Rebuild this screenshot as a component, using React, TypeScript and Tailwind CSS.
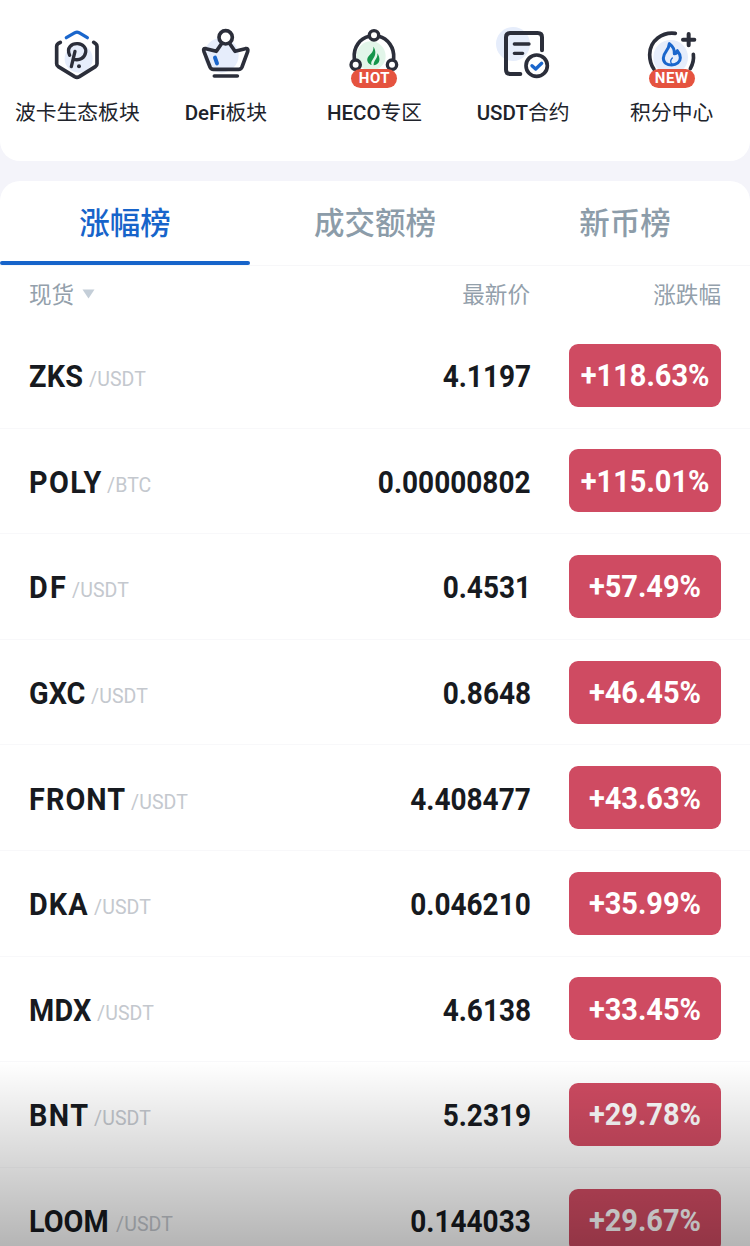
import React from 'react';

const ink = '#2b2e3a';
const blue = '#1a66cc';
const pale = '#e6edfb';

function PolkaIcon() {
  return (
    <svg viewBox="132 42 198 198" className="h-[66px] w-[66px]" fill="none" strokeLinecap="round" strokeLinejoin="round">
      <circle cx="236" cy="146" r="42" fill={pale} />
      <path d="M181 97 L174 101 Q170 104 170 109 V161 Q170 167 175 170 L224 200 Q231 204 238 200 L286 170 Q291 167 291 161 V109 Q291 104 287 101 L281 97" stroke={ink} strokeWidth="11" />
      <path d="M199 83 L225 68 Q231 65 237 68 L262 83" stroke={blue} strokeWidth="10" />
      <path d="M209 136 C198 112 216 100 233 101 C250 102 259 114 257 127 C254 145 239 152 221 148 M225 124 L214 170" stroke={ink} strokeWidth="10" />
      <circle cx="237" cy="169" r="6" fill={ink} />
    </svg>
  );
}

function CrownIcon() {
  return (
    <svg viewBox="579 42 198 198" className="h-[66px] w-[66px]" fill="none" strokeLinecap="round" strokeLinejoin="round">
      <circle cx="664" cy="136" r="52" fill={pale} />
      <path d="M664 102 L649 124 L618 116 Q608 114 612 125 L630 171 Q633 178 640 178 H716 Q723 178 726 171 L743 125 Q746 114 736 116 L705 124 L690 102" stroke={ink} strokeWidth="11" />
      <circle cx="677" cy="82" r="20" fill="#fff" stroke={ink} strokeWidth="11" />
      <path d="M645 143 L651 160" stroke={blue} strokeWidth="12" />
      <path d="M643 198 H712" stroke={ink} strokeWidth="11" />
    </svg>
  );
}

function HecoIcon() {
  return (
    <svg viewBox="95 42 198 198" className="h-[66px] w-[66px]" fill="none" strokeLinecap="round" strokeLinejoin="round">
      <circle cx="185" cy="138" r="44" fill="#e2f5e9" />
      <path d="M135 146 C131 111 153 85 179 79 M208 79 C235 86 256 112 253 146" stroke={ink} strokeWidth="11" />
      <circle cx="194" cy="76" r="14" fill="#fff" stroke={ink} strokeWidth="10" />
      <circle cx="139" cy="164" r="14" fill="#fff" stroke={ink} strokeWidth="10" />
      <circle cx="248" cy="164" r="14" fill="#fff" stroke={ink} strokeWidth="10" />
      <path d="M192 110 C195 128 177 134 174 146 C172 155 179 162 187 165 C181 151 198 146 198 128 C198 120 196 115 192 110Z" fill="#15954a" />
      <path d="M204 130 C207 145 192 151 193 166 C205 164 212 156 210 145 C209 138 207 134 204 130Z" fill="#15954a" />
    </svg>
  );
}

function ContractIcon() {
  return (
    <svg viewBox="539 42 198 198" className="h-[66px] w-[66px]" fill="none" strokeLinecap="round" strokeLinejoin="round">
      <circle cx="608" cy="102" r="51" fill={pale} />
      <path d="M630 192 H600 Q587 192 587 179 V82 Q587 69 600 69 H682 Q695 69 695 82 V121" stroke={ink} strokeWidth="12" />
      <path d="M612 102 H656 M612 130 H637" stroke={ink} strokeWidth="10" />
      <circle cx="679" cy="167" r="32" fill="#fff" stroke={ink} strokeWidth="11" />
      <path d="M665 167 L676 177 L694 160" stroke={blue} strokeWidth="10" />
    </svg>
  );
}

function PointsIcon() {
  return (
    <svg viewBox="117 42 198 198" className="h-[66px] w-[66px]" fill="none" strokeLinecap="round" strokeLinejoin="round">
      <circle cx="212" cy="142" r="52" fill={pale} />
      <path d="M226 70 C188 65 149 91 149 134 C149 153 154 166 162 178 M280 133 C282 148 279 162 271 176" stroke={ink} strokeWidth="11" />
      <path d="M266 72 V106 M249 89 H283" stroke={ink} strokeWidth="12" />
      <path d="M208 101 C207 122 190 126 190 144 C190 158 201 165 215 165 C230 165 241 156 241 143 C241 135 237 128 232 122 C231 129 228 131 223 131 C224 118 216 107 208 101Z" stroke={blue} strokeWidth="9" />
      <path d="M217 144 C211 150 210 157 216 162" stroke={blue} strokeWidth="4" />
    </svg>
  );
}

const shortcuts = [
  { latin: '', label: '波卡生态板块', Icon: PolkaIcon },
  { latin: 'DeFi', label: '板块', Icon: CrownIcon },
  { latin: 'HECO', label: '专区', Icon: HecoIcon, tag: 'HOT' },
  { latin: 'USDT', label: '合约', Icon: ContractIcon },
  { latin: '', label: '积分中心', Icon: PointsIcon, tag: 'NEW' },
];

const rows = [
  { base: 'ZKS', quote: 'USDT', price: '4.1197', change: '+118.63%', fit: 'w-[60px] tracking-[0.3px]' },
  { base: 'POLY', quote: 'BTC', price: '0.00000802', change: '+115.01%', fit: 'w-[78px] tracking-[1.6px]' },
  { base: 'DF', quote: 'USDT', price: '0.4531', change: '+57.49%', fit: 'w-[43px] tracking-[2.4px]' },
  { base: 'GXC', quote: 'USDT', price: '0.8648', change: '+46.45%', fit: 'w-[62px]' },
  { base: 'FRONT', quote: 'USDT', price: '4.408477', change: '+43.63%', fit: 'w-[102px] tracking-[1.2px]' },
  { base: 'DKA', quote: 'USDT', price: '0.046210', change: '+35.99%', fit: 'w-[65px] tracking-[1.2px]' },
  { base: 'MDX', quote: 'USDT', price: '4.6138', change: '+33.45%', fit: 'w-[68px] tracking-[0.2px]' },
  { base: 'BNT', quote: 'USDT', price: '5.2319', change: '+29.78%', fit: 'w-[65px] tracking-[1.6px]' },
  { base: 'LOOM', quote: 'USDT', price: '0.144033', change: '+29.67%', fit: 'w-[87px]' },
];

export default function App() {
  return (
    <div className="relative h-[1246px] w-[750px] overflow-hidden bg-[#f4f4fa] font-[Roboto,'Noto_Sans_CJK_SC',sans-serif]">
      <section className="grid h-[161px] grid-cols-5 rounded-b-[20px] bg-white pt-6 pr-[4px] pl-[3px]">
        {shortcuts.map(({ latin, label, Icon, tag }) => (
          <div key={label} className="flex flex-col items-center">
            <div className="relative h-[66px] w-[66px]">
              <Icon />
              {tag && (
                <span className="absolute top-[45px] left-[10px] flex h-[18.5px] w-[46px] items-center justify-center rounded-full bg-[#e5533f] text-[15px] leading-none font-bold tracking-[0.5px] text-white">
                  {tag}
                </span>
              )}
            </div>
            <div className="mt-2 text-[20.8px] leading-[30px] whitespace-nowrap text-[#20232b]">
              {latin && <span className="text-[20.5px] font-medium">{latin}</span>}
              {label}
            </div>
          </div>
        ))}
      </section>

      <section className="mt-[19.5px] rounded-t-[20px] bg-white">
        <div className="grid h-[85.5px] grid-cols-3 border-b border-[#f7f7f9] text-[30.5px] font-medium text-[#8c9ca9]">
          {['涨幅榜', '成交额榜', '新币榜'].map((tab, i) => (
            <div key={tab} className={i === 0 ? 'flex flex-col items-center text-[#1764ca]' : 'flex flex-col items-center'}>
              <span className="flex h-20 items-center pt-[6px]">{tab}</span>
              {i === 0 && <span className="h-1 w-full rounded-full bg-[#1764ca]" />}
            </div>
          ))}
        </div>
        <div className="flex h-[57px] items-center px-[29px] pt-[3px] text-[22.6px] text-[#93a0ab]">
          <span>现货</span>
          <svg viewBox="0 0 13 10" className="mb-[4px] ml-2 h-[10px] w-[13px]">
            <path d="M0.5 0.5H12.5L6.5 9.5Z" fill="#c4ced8" />
          </svg>
          <span className="ml-auto">最新价</span>
          <span className="w-[191px] text-right">涨跌幅</span>
        </div>

        {rows.map(({ base, quote, price, change, fit }) => (
          <div key={base} className="flex h-[105.6px] items-center border-b-[1.5px] border-[#f8f8fa] px-[29px]">
            <div className="flex items-baseline pt-[2px]">
              <div className={`${fit} text-[32px] leading-10 font-bold whitespace-nowrap text-[#171a20]`}>
                <span className="inline-block origin-left scale-x-[0.9]">{base}</span>
              </div>
              <div className="relative -top-px text-[19.5px] tracking-[0.1px] text-[#c4c8ce]">/{quote}</div>
            </div>
            <div className="ml-auto origin-right scale-x-[0.875] pt-[2px] text-[32px] leading-10 font-bold text-[#171a20]">{price}</div>
            <div className="ml-[37.5px] flex h-[63px] w-[152.5px] items-center justify-center rounded-[9px] bg-[#cf4b62] text-[32px] font-bold text-white">
              <span className="relative left-[0.5px] scale-x-[0.905]">{change}</span>
            </div>
          </div>
        ))}
      </section>
      <div className="pointer-events-none absolute inset-x-0 bottom-0 h-[185px] bg-linear-to-b from-black/0 to-black/29" />
    </div>
  );
}
